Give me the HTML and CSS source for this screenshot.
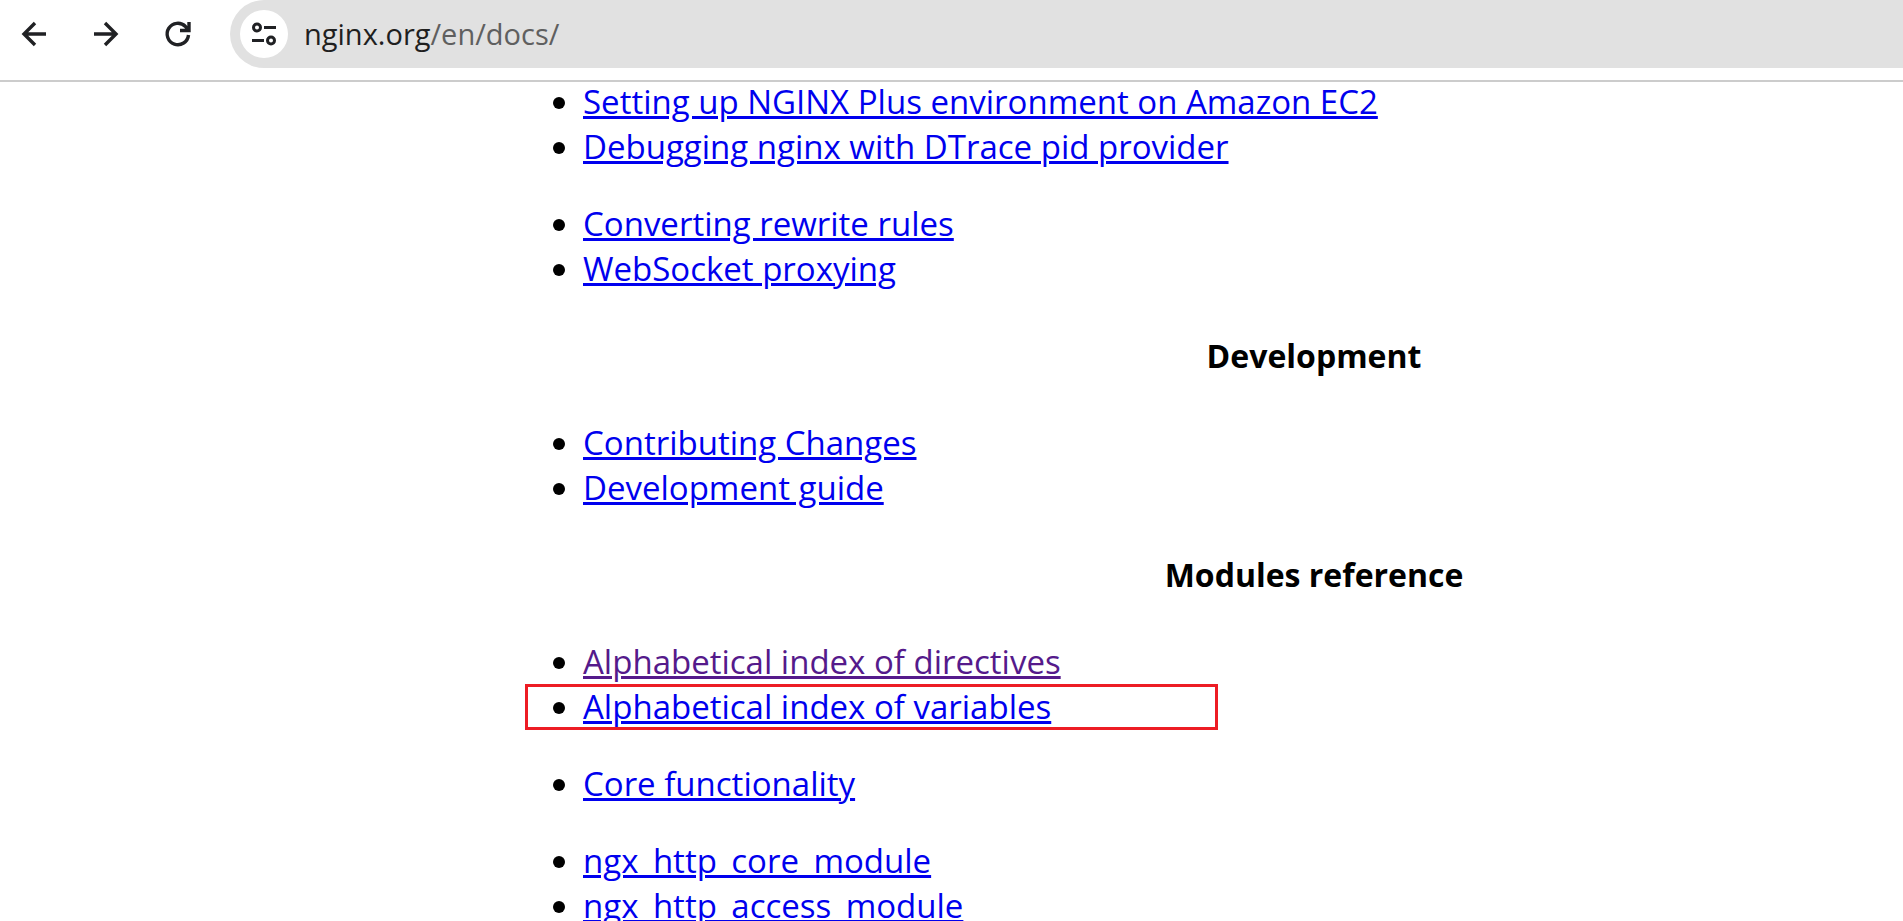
FILE: index.html
```html
<!DOCTYPE html>
<html lang="en">
<head>
<meta charset="utf-8">
<meta name="viewport" content="width=device-width, initial-scale=1">
<title>nginx documentation</title>
<link rel="stylesheet" href="styles.css">
</head>
<body>
<header class="toolbar">
  <nav class="nav-buttons" aria-label="Browser navigation">
    <button class="icon-button" type="button" aria-label="Back">
      <svg viewBox="0 0 24 24"><path d="M24 12H2M13 1L2 12l11 11"/></svg>
    </button>
    <button class="icon-button" type="button" aria-label="Forward">
      <svg viewBox="0 0 24 24"><path d="M0 12h22M11 1l11 11-11 11"/></svg>
    </button>
    <button class="icon-button" type="button" aria-label="Reload">
      <svg viewBox="0 0 24 24"><path d="M22.500 13A10.700 10.700 0 1 1 19.500 4.500l2.500 3.500M23 0v8.500H14"/></svg>
    </button>
  </nav>
  <div class="address-bar">
    <button class="site-info" type="button" aria-label="View site information">
      <svg viewBox="0 0 24 24"><circle cx="5" cy="5.500" r="3.500"/><path d="M12 5.500H24M0 18.500h12"/><circle cx="19" cy="18.500" r="3.500"/></svg>
    </button>
    <div class="url" role="textbox" aria-label="Address" contenteditable="true" spellcheck="false">nginx.org<span class="url-path">/en/docs/</span></div>
  </div>
</header>
<main class="docs">
  <ul class="doc-list">
    <li><a href="#ec2">Setting up NGINX Plus environment on Amazon EC2</a></li>
    <li><a href="#dtrace">Debugging nginx with DTrace pid provider</a></li>
  </ul>
  <ul class="doc-list">
    <li><a href="#rewrite">Converting rewrite rules</a></li>
    <li><a href="#websocket">WebSocket proxying</a></li>
  </ul>
  <h4 class="doc-heading">Development</h4>
  <ul class="doc-list">
    <li><a href="#contributing">Contributing Changes</a></li>
    <li><a href="#guide">Development guide</a></li>
  </ul>
  <h4 class="doc-heading">Modules reference</h4>
  <ul class="doc-list">
    <li><a class="visited" href="#directives">Alphabetical index of directives</a></li>
    <li class="highlighted"><a href="#variables">Alphabetical index of variables</a></li>
  </ul>
  <ul class="doc-list">
    <li><a href="#core">Core functionality</a></li>
  </ul>
  <ul class="doc-list">
    <li><a href="#http-core">ngx_http_core_module</a></li>
    <li><a href="#http-access">ngx_http_access_module</a></li>
  </ul>
</main>
</body>
</html>
```
FILE: styles.css
```css
*,
*::after { box-sizing: border-box; }

body {
  display: flex;
  flex-direction: column;
  height: 100vh;
  margin: 0;
  overflow: hidden;
  background: #fff;
  color: #000;
  font-family: "Open Sans", "Noto Sans", sans-serif;
}

.toolbar {
  display: flex;
  flex: none;
  align-items: flex-start;
  gap: 28px;
  padding-bottom: 12px;
  border-bottom: 2px solid #ccc;
}

.nav-buttons {
  display: flex;
  gap: 24px;
  padding: 10px 0 0 10px;
}

.icon-button,
.site-info {
  display: grid;
  place-items: center;
  width: 48px;
  height: 48px;
  padding: 0;
  border: 0;
  border-radius: 50%;
  background: #fff;
}

.icon-button svg,
.site-info svg {
  width: 24px;
  height: 24px;
  fill: none;
  stroke: #202124;
  stroke-width: 3.4;
  overflow: visible;
}

.site-info svg { stroke-width: 3; }

.address-bar {
  display: flex;
  flex: 1;
  align-items: center;
  gap: 16px;
  height: 68px;
  padding-left: 10px;
  border-radius: 34px 0 0 34px;
  background: #e1e1e1;
}

.url {
  color: #1f1f1f;
  font-size: 29px;
  line-height: 40px;
  outline: none;
}

.url-path { color: #5f5f5f; }

.docs {
  flex: 1;
  min-height: 0;
  margin-top: -3px;
  padding-left: 543px;
  overflow: hidden;
  font-size: 33px;
  line-height: 45px;
}

.toolbar { position: relative; }

.doc-list {
  margin: 0;
  padding-left: 40px;
}

.doc-list + .doc-list { margin-top: 32px; }

.doc-heading {
  margin: 42px 0;
  padding-left: 182px;
  font-size: 32px;
  font-weight: 700;
  text-align: center;
}

a {
  color: #00e;
  text-decoration-thickness: 3px;
  text-underline-offset: 2px;
}

.visited { color: #551a8b; }

.highlighted { position: relative; }

.highlighted::after {
  content: "";
  position: absolute;
  top: 0;
  left: -58px;
  width: 693px;
  height: 46px;
  border: 3px solid #ed1c24;
  pointer-events: none;
}
```
